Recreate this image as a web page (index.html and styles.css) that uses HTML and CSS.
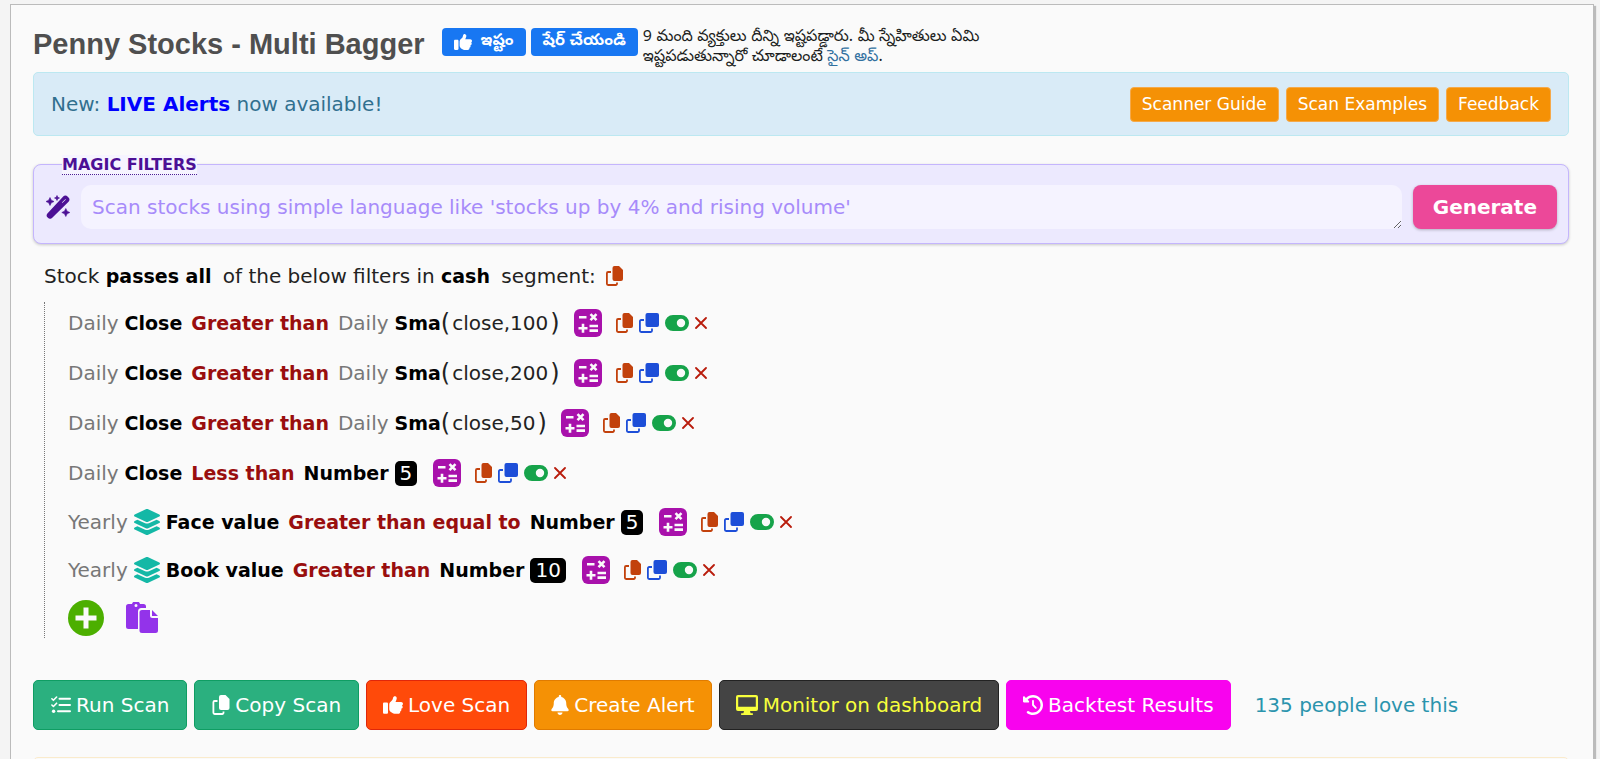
FILE: index.html
```html
<!DOCTYPE html>
<html lang="en">
<head>
<meta charset="utf-8">
<title>Penny Stocks - Multi Bagger</title>
<link rel="stylesheet" href="styles.css">
</head>
<body>
<svg class="sprite" aria-hidden="true">
  <symbol id="thumb" viewBox="0 0 512 512"><path d="M313.4 32.9c26 5.2 42.9 30.5 37.7 56.5l-2.3 11.4c-5.3 26.7-15.1 52.1-28.8 75.2H464c26.5 0 48 21.5 48 48c0 18.5-10.5 34.6-25.9 42.6C497 275.4 504 288.9 504 304c0 23.4-16.8 42.9-38.9 47.1c4.4 7.3 6.9 15.8 6.9 24.9c0 21.3-13.9 39.4-33.1 45.6c.7 3.3 1.1 6.8 1.1 10.4c0 26.5-21.5 48-48 48H294.5c-19 0-37.5-5.6-53.3-16.1l-38.5-25.7C176 420.4 160 390.4 160 358.3V247.1c0-29.2 13.3-56.7 36-75l7.4-5.9c26.5-21.2 44.6-51 51.2-84.2l2.3-11.4c5.2-26 30.5-42.9 56.5-37.7zM32 192H96c17.7 0 32 14.3 32 32V448c0 17.7-14.3 32-32 32H32c-17.7 0-32-14.3-32-32V224c0-17.7 14.3-32 32-32z"/></symbol>
  <symbol id="layers" viewBox="32 0 512 512"><path d="M264.5 5.2c14.9-6.9 32.1-6.9 47 0l218.6 101c8.5 3.9 13.9 12.4 13.9 21.8s-5.4 17.9-13.9 21.8l-218.6 101c-14.9 6.9-32.1 6.9-47 0L45.9 149.8C37.4 145.8 32 137.3 32 128s5.4-17.9 13.9-21.8L264.5 5.2zM476.9 209.6l53.2 24.6c8.5 3.9 13.9 12.4 13.9 21.8s-5.4 17.9-13.9 21.8l-218.6 101c-14.9 6.9-32.1 6.9-47 0L45.9 277.8C37.4 273.8 32 265.3 32 256s5.4-17.9 13.9-21.8l53.2-24.6 152 70.2c23.4 10.8 50.4 10.8 73.8 0l152-70.2zm-152 198.2l152-70.2 53.2 24.6c8.5 3.9 13.9 12.4 13.9 21.8s-5.4 17.9-13.9 21.8l-218.6 101c-14.9 6.9-32.1 6.9-47 0L45.9 405.8C37.4 401.8 32 393.3 32 384s5.4-17.9 13.9-21.8l53.2-24.6 152 70.2c23.4 10.8 50.4 10.8 73.8 0z"/></symbol>
  <symbol id="bell" viewBox="0 0 448 512"><path d="M224 0c-17.7 0-32 14.3-32 32V51.2C119 66 64 130.6 64 208v18.8c0 47-17.3 92.4-48.5 127.6l-7.4 8.3c-8.4 9.4-10.4 22.9-5.3 34.4S19.4 416 32 416H416c12.6 0 24-7.4 29.2-18.9s3.1-25-5.3-34.4l-7.4-8.3C401.3 319.2 384 273.9 384 226.8V208c0-77.4-55-142-128-156.8V32c0-17.7-14.3-32-32-32zm45.3 493.3c12-12 18.7-28.3 18.7-45.3H160c0 17 6.7 33.3 18.7 45.3s28.3 18.7 45.3 18.7s33.3-6.7 45.3-18.7z"/></symbol>
  <symbol id="history" viewBox="0 0 512 512"><path d="M75 75L41 41C25.9 25.9 0 36.6 0 57.9V168c0 13.3 10.7 24 24 24H134.1c21.4 0 32.1-25.9 17-41l-30.8-30.8C155 85.5 203 64 256 64c106 0 192 86 192 192s-86 192-192 192c-40.8 0-78.6-12.7-109.7-34.4c-14.5-10.1-34.4-6.6-44.6 7.9s-6.6 34.4 7.9 44.6C151.2 495 201.7 512 256 512c141.4 0 256-114.6 256-256S397.4 0 256 0C185.3 0 121.3 28.7 75 75zm181 53c-13.3 0-24 10.7-24 24V256c0 6.4 2.5 12.5 7 17l72 72c9.4 9.4 24.6 9.4 33.9 0s9.4-24.6 0-33.9l-65-65V152c0-13.3-10.7-24-24-24z"/></symbol>
  <symbol id="desktop" viewBox="0 0 22 20"><path fill-rule="evenodd" d="M2 0h18a2 2 0 0 1 2 2v12a2 2 0 0 1-2 2h-6l.6 2.2h1.6a.9.9 0 0 1 0 1.8H5.800a.9.9 0 0 1 0-1.800h1.600L8 16H2a2 2 0 0 1-2-2V2a2 2 0 0 1 2-2zM2.200 2.200v9.600h17.600V2.200z"/></symbol>
  <symbol id="tasks" viewBox="0 0 20 18"><path d="M8.500 2.800h10.500M8.500 9h10.500M7 15.200h12" fill="none" stroke="currentColor" stroke-width="2" stroke-linecap="round"/><path d="M.9 2.800l1.500 1.500L5.600 1M.9 9l1.500 1.500L5.600 7.200" fill="none" stroke="currentColor" stroke-width="1.600" stroke-linecap="round" stroke-linejoin="round"/><circle cx="2.600" cy="15.200" r="1.700"/></symbol>
  <symbol id="copy" viewBox="0 0 17 20"><path d="M8.500 0h4.500L17 4V13a2 2 0 0 1-2 2H8.500a2 2 0 0 1-2-2V2a2 2 0 0 1 2-2z"/><path d="M5 6H2.100A1.200 1.200 0 0 0 .9 7.200v10.600A1.200 1.200 0 0 0 2.100 19h7.700a1.200 1.200 0 0 0 1.200-1.200v-1.300" fill="none" stroke="currentColor" stroke-width="1.800"/></symbol>
  <symbol id="clone" viewBox="0 0 20 20"><path d="M8.500 0H18a2 2 0 0 1 2 2v10a2 2 0 0 1-2 2H8.500a2 2 0 0 1-2-2V2a2 2 0 0 1 2-2z"/><path d="M5 7H2.100A1.200 1.200 0 0 0 .9 8.200v9.600A1.200 1.200 0 0 0 2.100 19h9.700a1.200 1.200 0 0 0 1.200-1.200v-2.300" fill="none" stroke="currentColor" stroke-width="1.800"/></symbol>
  <symbol id="toggle" viewBox="0 0 24 16"><path fill-rule="evenodd" d="M8 0h8a8 8 0 0 1 0 16H8A8 8 0 0 1 8 0zm8 3.800a4.200 4.200 0 1 0 0 8.400a4.200 4.200 0 0 0 0-8.400z"/></symbol>
  <symbol id="cross" viewBox="0 0 12 12"><path d="M1 1l10 10M11 1L1 11" fill="none" stroke="currentColor" stroke-width="1.800" stroke-linecap="round"/></symbol>
  <symbol id="calc" viewBox="0 0 28 28"><rect width="28" height="28" rx="6"/><path d="M5 8.300h7.500M16.500 5.200l6 6M22.500 5.200l-6 6M4.500 19.300h9M9 14.800v9M15.500 17h8.500M15.500 21.600h8.500" fill="none" stroke="#fafafa" stroke-width="2.600"/></symbol>
  <symbol id="plus" viewBox="0 0 36 36"><circle cx="18" cy="18" r="18"/><path d="M18 10v16M10 18h16" fill="none" stroke="#fafafa" stroke-width="5" stroke-linecap="square"/></symbol>
  <symbol id="paste" viewBox="0 0 32 32"><path fill-rule="evenodd" d="M2.500 2H6a4.200 4.200 0 0 1 8 0h3.500a2.500 2.500 0 0 1 2.500 2.500V6h-4.500A3.500 3.500 0 0 0 12 9.500V27H2.500A2.500 2.500 0 0 1 0 24.500v-20A2.500 2.500 0 0 1 2.500 2zM10 2a1.500 1.500 0 1 0 0 3a1.500 1.500 0 0 0 0-3z"/><path d="M16 8h8v5.500a2.500 2.500 0 0 0 2.500 2.500H32v12.500a2.500 2.500 0 0 1-2.500 2.500H16a2.500 2.500 0 0 1-2.500-2.500v-18A2.500 2.500 0 0 1 16 8zM26 8l6 6h-6z"/></symbol>
  <symbol id="wand" viewBox="0 0 24 24"><path fill-rule="evenodd" stroke="currentColor" stroke-width="1.600" stroke-linejoin="round" d="M2 19L17.800 2a2.200 2.200 0 0 1 3.200 0l1 1a2.200 2.200 0 0 1 0 3.200L5.700 22.300a2.200 2.200 0 0 1-3.200 0l-.5-.5a2.200 2.200 0 0 1 0-2.800zM14.800 7.400l1.600 1.600 4.600-4.500-1.500-1.500z"/><path d="M4 2.500l1.300 2.700L8 6.500 5.300 7.800 4 10.500 2.700 7.800 0 6.500l2.700-1.300zM11 .5l.8 1.700 1.700.8-1.700.8-.8 1.700-.8-1.700L8.500 3l1.700-.8zM19.800 13.500l1.300 2.700 2.700 1.300-2.700 1.300-1.300 2.700-1.300-2.700-2.700-1.300 2.700-1.300z" stroke="currentColor" stroke-width=".6"/></symbol>
</svg>

<main class="page">
  <header class="head">
    <h1 class="title">Penny Stocks - Multi Bagger</h1>
    <div class="social" lang="te">
      <button class="fb fb-like" type="button"><svg class="fb-icon"><use href="#thumb"/></svg>ఇష్టం</button>
      <button class="fb fb-share" type="button">షేర్ చేయండి</button>
      <p class="fb-note">9 మంది వ్యక్తులు దీన్ని ఇష్టపడ్డారు. మీ స్నేహితులు ఏమి ఇష్టపడుతున్నారో చూడాలంటే <a href="#">సైన్ అప్</a>.</p>
    </div>
  </header>

  <section class="notice">
    <p class="notice-text">New: <a class="live" href="#">LIVE Alerts</a> now available!</p>
    <nav class="notice-nav">
      <a class="chip" href="#">Scanner Guide</a>
      <a class="chip" href="#">Scan Examples</a>
      <a class="chip" href="#">Feedback</a>
    </nav>
  </section>

  <section class="magic">
    <label class="magic-label" for="magic-text">MAGIC FILTERS</label>
    <svg class="wand"><use href="#wand"/></svg>
    <textarea class="magic-text" id="magic-text" rows="1" placeholder="Scan stocks using simple language like 'stocks up by 4% and rising volume'"></textarea>
    <button class="generate" type="button">Generate</button>
  </section>

  <section class="scan">
    <p class="summary">Stock <b class="gap">passes all</b> of the below filters in <b class="gap">cash</b> segment: <button class="tool copy" type="button" aria-label="Copy"><svg class="i-copy"><use href="#copy"/></svg></button></p>
    <ul class="filters">
      <li class="row"><span class="period">Daily</span><b>Close</b><b class="op">Greater than</b><span class="period">Daily</span><span class="fn"><b>Sma</b><span class="paren">(</span><span class="arg">close,100</span><span class="paren">)</span></span><span class="tools"></span></li>
      <li class="row"><span class="period">Daily</span><b>Close</b><b class="op">Greater than</b><span class="period">Daily</span><span class="fn"><b>Sma</b><span class="paren">(</span><span class="arg">close,200</span><span class="paren">)</span></span><span class="tools"></span></li>
      <li class="row"><span class="period">Daily</span><b>Close</b><b class="op">Greater than</b><span class="period">Daily</span><span class="fn"><b>Sma</b><span class="paren">(</span><span class="arg">close,50</span><span class="paren">)</span></span><span class="tools"></span></li>
      <li class="row"><span class="period">Daily</span><b>Close</b><b class="op">Less than</b><b>Number</b><span class="num">5</span><span class="tools"></span></li>
      <li class="row yearly"><span class="period">Yearly</span><svg class="i-layers"><use href="#layers"/></svg><b>Face value</b><b class="op">Greater than equal to</b><b>Number</b><span class="num">5</span><span class="tools"></span></li>
      <li class="row yearly"><span class="period">Yearly</span><svg class="i-layers"><use href="#layers"/></svg><b>Book value</b><b class="op">Greater than</b><b>Number</b><span class="num">10</span><span class="tools"></span></li>
      <li class="adders">
        <button class="tool add" type="button" aria-label="Add filter"><svg class="i-plus"><use href="#plus"/></svg></button>
        <button class="tool paste" type="button" aria-label="Paste filter"><svg class="i-paste"><use href="#paste"/></svg></button>
      </li>
    </ul>
  </section>

  <div class="actions">
    <button class="btn run" type="button"><svg class="i-20"><use href="#tasks"/></svg>Run Scan</button>
    <button class="btn run" type="button"><svg class="i-18"><use href="#copy"/></svg>Copy Scan</button>
    <button class="btn love" type="button"><svg class="i-20"><use href="#thumb"/></svg>Love Scan</button>
    <button class="btn alert" type="button"><svg class="i-18"><use href="#bell"/></svg>Create Alert</button>
    <button class="btn monitor" type="button"><svg class="i-22"><use href="#desktop"/></svg>Monitor on dashboard</button>
    <button class="btn backtest" type="button"><svg class="i-20"><use href="#history"/></svg>Backtest Results</button>
    <a class="lovers" href="#">135 people love this</a>
  </div>
  <div class="next-panel"></div>
</main>

<template id="row-tools">
  <button class="tool calc" type="button" aria-label="Calculate"><svg class="i-calc"><use href="#calc"/></svg></button>
  <button class="tool copy" type="button" aria-label="Copy"><svg class="i-copy"><use href="#copy"/></svg></button>
  <button class="tool clone" type="button" aria-label="Duplicate"><svg class="i-clone"><use href="#clone"/></svg></button>
  <button class="tool toggle" type="button" aria-label="Enabled"><svg class="i-toggle"><use href="#toggle"/></svg></button>
  <button class="tool remove" type="button" aria-label="Remove"><svg class="i-cross"><use href="#cross"/></svg></button>
</template>
<script src="rows.js"></script>
</body>
</html>
```
FILE: styles.css
```css
* { box-sizing: border-box; }
body {
  margin: 0;
  padding: 4px 6px 0 10px;
  background: #f4f4f4;
  color: #222;
  font: 20px/24px "DejaVu Sans", Verdana, sans-serif;
  overflow: hidden;
}
p, h1, ul { margin: 0; padding: 0; }
a { text-decoration: none; }
button { font: inherit; cursor: pointer; }
svg { display: block; fill: currentColor; flex: none; }
.sprite { position: absolute; width: 0; height: 0; }

.page {
  border: 1px solid #bbb;
  border-bottom: 0;
  background: #fafafa;
  box-shadow: 2px 2px 1px #bbb;
  padding: 22px 24px 0 22px;
  min-height: calc(100vh - 4px);
}

.head { display: flex; align-items: flex-start; height: 45px; }
.title {
  color: #4f4f4f;
  font: bold 29px/34px "Liberation Sans", Arial, sans-serif;
  white-space: nowrap;
}
.social { display: flex; align-items: flex-start; gap: 5px; margin: 1px 0 0 17px; }
.fb {
  display: flex;
  align-items: center;
  justify-content: center;
  gap: 9px;
  height: 28px;
  padding: 0 12px;
  border: 0;
  border-radius: 4px;
  background: #1877f2;
  color: #fff;
  font: bold 16px/20px "Noto Sans Telugu", "Noto Sans", sans-serif;
  white-space: nowrap;
}
.fb-icon { width: 18px; height: 18px; }
.fb-note {
  width: 340px;
  color: #1c1e21;
  font: 16px/20px "Noto Sans Telugu", "Noto Sans", sans-serif;
}
.fb-note a { color: #31709f; }

.notice {
  display: flex;
  align-items: center;
  justify-content: space-between;
  height: 64px;
  padding: 0 17px;
  border: 1px solid #bce8f1;
  border-radius: 5px;
  background: #d9ebf7;
}
.notice-text { color: #31708f; }
.live { color: #00f; font-weight: bold; }
.notice-nav { display: flex; gap: 7px; }
.chip {
  padding: 0 11px;
  border: 1px solid #f5a94a;
  border-radius: 4px;
  background: #f59105;
  color: #fff;
  font-size: 17px;
  line-height: 33px;
}

.magic {
  position: relative;
  display: flex;
  align-items: center;
  gap: 11px;
  height: 80px;
  margin-top: 28px;
  padding: 6px 11px 0 12px;
  border: 1px solid #c4b5fd;
  border-radius: 8px;
  background: #ece9fe;
  box-shadow: 0 1px 3px rgba(0, 0, 0, .2);
}
.magic-label {
  position: absolute;
  top: -10px;
  left: 28px;
  background: #f6f4ff;
  border-bottom: 1px dotted #4c1d95;
  color: #4c1095;
  font-weight: bold;
  font-size: 16px;
  line-height: 19px;
}
.wand { width: 24px; height: 24px; color: #4c1095; }
.magic-text {
  flex: 1;
  height: 44px;
  padding: 10px 11px;
  border: 0;
  border-radius: 10px;
  background: #f5f3ff;
  font: inherit;
  resize: vertical;
}
.magic-text::placeholder { color: #a78bfa; }
.generate {
  height: 44px;
  padding: 0 20px;
  border: 0;
  border-radius: 8px;
  background: #ec4899;
  box-shadow: 0 1px 3px rgba(0, 0, 0, .25);
  color: #fff;
  font-weight: bold;
}

.scan { padding-left: 11px; }
.summary { margin-top: 20px; }
.summary, .arg { color: #222; }
.summary b, .row b { color: #000; font-size: 19px; }
.summary .gap { margin-right: 5px; }
.summary .tool { display: inline-block; margin-left: 4px; vertical-align: -3px; }
.filters {
  display: flex;
  flex-direction: column;
  gap: 8px;
  list-style: none;
  margin-top: 14px;
  padding-left: 23px;
  border-left: 1px dotted #777;
}
.row { display: flex; align-items: center; gap: 6px; height: 42px; }
.yearly { height: 40px; }
.period { color: #777; }
.row .op { color: #990e0e; margin: 0 3px; }
.fn { display: flex; align-items: center; }
.arg { margin: 0 2px; }
.paren { font-size: 24px; }
.num {
  margin-right: 2px;
  padding: 0 5px;
  border-radius: 5px;
  background: #000;
  color: #fff;
  line-height: 25px;
}
.tools { display: flex; align-items: center; gap: 6px; margin-left: 8px; }
.tool { display: block; padding: 0; border: 0; background: none; }
.calc { color: #a811ab; margin-right: 8px; }
.copy { color: #c2410c; }
.clone { color: #1d4ed8; }
.toggle { color: #16a34a; }
.remove { color: #b91c0c; }
.i-calc { width: 28px; height: 28px; }
.i-copy { width: 17px; height: 20px; }
.i-clone { width: 20px; height: 20px; }
.i-toggle { width: 24px; height: 16px; }
.i-cross { width: 12px; height: 12px; }
.i-layers { width: 26px; height: 26px; color: #14b8a6; }
.i-plus { width: 36px; height: 36px; color: #4caf00; }
.i-paste { width: 32px; height: 32px; color: #9333ea; }
.adders { display: flex; align-items: center; gap: 22px; height: 40px; }

.actions { display: flex; align-items: center; gap: 7px; margin-top: 42px; }
.btn {
  display: flex;
  align-items: center;
  gap: 5px;
  height: 50px;
  padding: 0 16px;
  border: 1px solid;
  border-radius: 5px;
  color: #fff;
  white-space: nowrap;
}
.i-18 { width: 18px; height: 20px; }
.i-20 { width: 20px; height: 20px; }
.i-22 { width: 22px; height: 20px; }
.run { background: #2bb07f; border-color: #0f9d63; padding: 0 17px; }
.love { background: #ff4a0a; border-color: #e0260a; }
.alert { background: #f59105; border-color: #e07b00; }
.monitor { background: #444; border-color: #222; color: #f7ff3c; }
.backtest { background: #f803ee; border-color: #f803ee; }
.lovers { margin-left: 17px; color: #2a94ad; }
.next-panel { height: 20px; margin-top: 27px; border: 1px solid #faebcc; border-radius: 5px; }
```
FILE: rows.js
```js
const tools = document.getElementById("row-tools");
document.querySelectorAll(".tools").forEach((slot) => {
  slot.append(tools.content.cloneNode(true));
});
```
